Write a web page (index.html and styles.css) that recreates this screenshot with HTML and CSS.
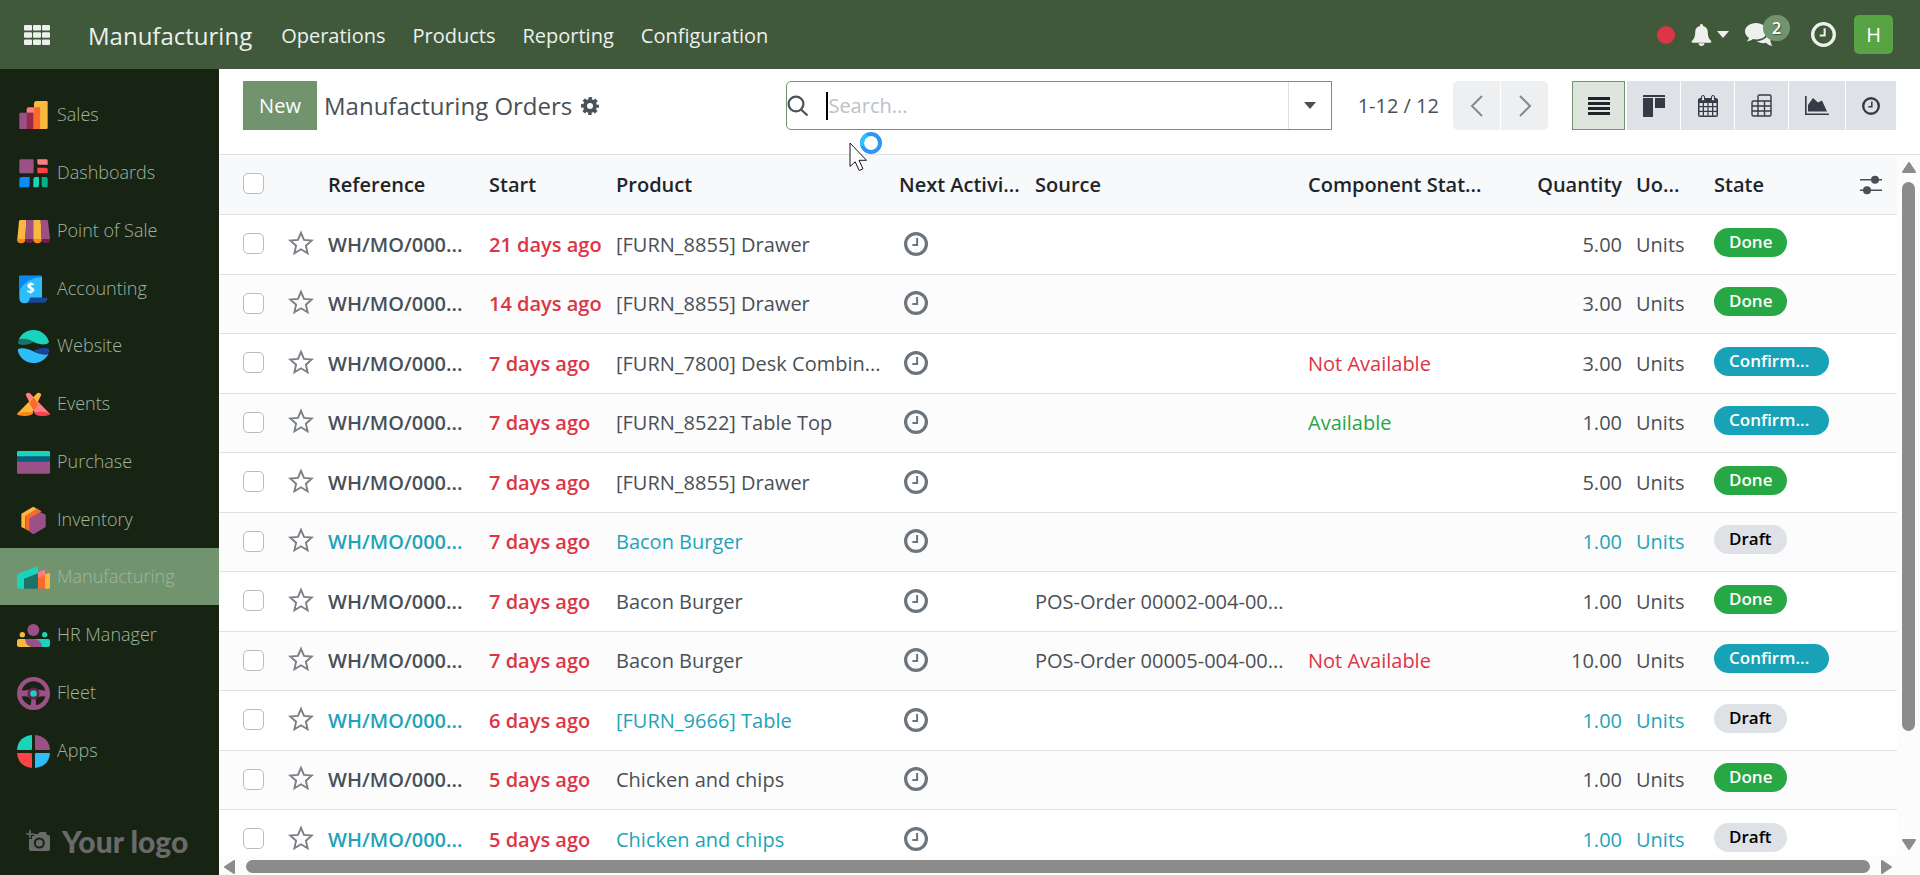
FILE: index.html
```html
<!DOCTYPE html>
<html lang="en">
<head>
  <meta charset="UTF-8" />
  <meta name="viewport" content="width=device-width, initial-scale=1" />
  <title>Manufacturing Orders</title>
  <link rel="stylesheet" href="styles.css">
</head>
<body>

  <!-- shared icons -->
  <svg class="sprite" aria-hidden="true">
    <symbol id="i-star" viewBox="0 0 26 26">
      <path d="M13 2.8l3 7.1 7.7.7-5.8 5.1 1.7 7.5-6.6-3.9-6.6 3.9 1.7-7.5-5.8-5.1 7.7-.7z" fill="none" stroke="currentColor" stroke-width="1.9" />
    </symbol>
    <symbol id="i-clock" viewBox="0 0 24 24">
      <circle cx="12" cy="12" r="10.4" fill="none" stroke="currentColor" stroke-width="3.2" />
      <path d="M13.1 6v7H8.4" fill="none" stroke="currentColor" stroke-width="2" />
    </symbol>
  </svg>

  <header class="navbar">
    <button class="apps-btn" aria-label="Apps">
      <svg width="26" height="20" viewBox="0 0 26 20" fill="#edf0ec">
        <rect width="8" height="5.6" rx="1" /><rect x="9" width="8" height="5.6" rx="1" /><rect x="18" width="8" height="5.6" rx="1" />
        <rect y="7.2" width="8" height="5.6" rx="1" /><rect x="9" y="7.2" width="8" height="5.6" rx="1" /><rect x="18" y="7.2" width="8" height="5.6" rx="1" />
        <rect y="14.4" width="8" height="5.6" rx="1" /><rect x="9" y="14.4" width="8" height="5.6" rx="1" /><rect x="18" y="14.4" width="8" height="5.6" rx="1" />
      </svg>
    </button>
    <a class="brand" href="#">Manufacturing</a>
    <nav class="menu">
      <a href="#">Operations</a>
      <a href="#">Products</a>
      <a href="#">Reporting</a>
      <a href="#">Configuration</a>
    </nav>
    <div class="systray">
      <span class="dot"></span>
      <button class="bell" aria-label="Notifications">
        <svg width="21" height="22" viewBox="0 0 21 22" fill="#edf0ec">
          <path d="M10.5 0c.9 0 1.5.6 1.5 1.5v.6c3 .6 4.8 2.9 4.8 6 0 5 1.300 7.300 3.700 9.100 0 .9-.7 1.500-1.500 1.500H2c-.8 0-1.500-.6-1.500-1.500C2.900 15.400 4.200 13.100 4.200 8.100c0-3.100 1.800-5.400 4.800-6v-.6C9 .6 9.600 0 10.500 0z" />
          <path d="M7.600 19.300h5.800a2.900 2.700 0 0 1-5.800 0z" />
        </svg>
        <svg width="12" height="7" viewBox="0 0 12 7" fill="#edf0ec"><path d="M0 0h12L6 7z" /></svg>
      </button>
      <button class="messages" aria-label="Messages">
        <svg width="29" height="26" viewBox="0 0 29 26" fill="#edf0ec">
          <path d="M11 1C4.900 1 0 4.700 0 9.400c0 2.600 1.600 4.900 4 6.400-.4 1.600-1.200 2.600-2.200 3.600 2.500-.2 4.500-1 6.200-2.300 1 .2 2 .3 3 .3 6.100 0 11-3.600 11-8S17.100 1 11 1z" />
          <path d="M24 7.500c2.700 1.300 4.400 3.500 4.400 6 0 2.100-1.200 4-3.200 5.300.4 1.900 1.100 3.400 2.400 5.200-2.800-.3-4.900-1.400-6.400-3.200-3.700.8-7.200.1-9.700-1.700C18.500 19.200 24.500 14.500 24 7.500z" />
        </svg>
        <span class="count">2</span>
      </button>
      <button class="activity" aria-label="Activities">
        <svg width="25" height="25"><use href="#i-clock" /></svg>
      </button>
      <button class="avatar">H</button>
    </div>
  </header>

  <div class="layout">
    <aside class="sidebar">
      <nav class="app-list">
        <a href="#">
          <svg viewBox="0 0 99 99">
            <path d="M51 14q0-8 8-8h29q4 0 4 4v76q0 4-4 4H51z" fill="#fcb73e" />
            <path d="M29 31q0-6 6-6h34v65H29z" fill="#fe7e87" />
            <path d="M51 25h18v61q0 4-4 4H51z" fill="#fc6a2b" />
            <path d="M7 45q0-4 4-4h38v49H7z" fill="#9b5088" />
            <path d="M29 41h20v45q0 4-4 4H29z" fill="#962b48" />
          </svg>
          <span>Sales</span>
        </a>
        <a href="#">
          <svg viewBox="0 0 99 99">
            <rect x="7" y="7" width="43" height="42" rx="4" fill="#9b5088" />
            <path d="M61 7h27q4 0 4 4v12H67q-6 0-6-6z" fill="#fe7e87" />
            <path d="M61 32h25q6 0 6 6v11H65q-4 0-4-4z" fill="#fb4348" />
            <path d="M15 60h23v23q0 8-8 8H7V68q0-8 8-8z" fill="#0b8cf8" />
            <path d="M55 60h11v23q0 8-6 8H49V68q0-8 6-8z" fill="#1ad3bb" />
            <path d="M74 60h12q6 0 6 6v25H80q-6 0-6-8z" fill="#04b08b" />
          </svg>
          <span>Dashboards</span>
        </a>
        <a href="#">
          <svg viewBox="0 0 99 99">
            <path d="M0 72h25v3a12 9 0 0 1-25 0z" fill="#fb8a14" />
            <path d="M25 72h24v3a12 9 0 0 1-24 0zM74 72h25v3a12 9 0 0 1-25 0z" fill="#6d1f52" />
            <path d="M49 72h25v3a12 9 0 0 1-25 0z" fill="#fb8a14" />
            <path d="M10 15h18l-3 57H1L6 19q1-4 4-4z" fill="#fcb73e" />
            <path d="M28 15h21v57H25z" fill="#9b5088" />
            <path d="M49 15h22l3 57H49z" fill="#fcb73e" />
            <path d="M71 15h17q4 0 5 4l6 53H74z" fill="#9b5088" />
          </svg>
          <span>Point of Sale</span>
        </a>
        <a href="#">
          <svg viewBox="0 0 99 99">
            <path d="M7 8h64q4 0 4 4v62H39q0 17-16 17T7 74z" fill="#2ebcfa" />
            <path d="M7 8h64q4 0 4 4Q30 14 7 52z" fill="#0b86f5" />
            <path d="M39 74h52q0 15-14 15H28q11-3 11-15z" fill="#17479b" />
            <text x="41" y="61" text-anchor="middle" class="dollar">$</text>
          </svg>
          <span>Accounting</span>
        </a>
        <a href="#">
          <svg viewBox="0 0 99 99">
            <path d="M5 29C15 8 32 0 49 0c22 0 41 14 47 35-2 9-22 12-45 2C34 29 16 24 5 29z" fill="#1ad3bb" />
            <path d="M3 36c2-12 24-14 47 0-15 9-40 13-47 4z" fill="#1c7168" />
            <path d="M2 60c3-7 24-7 45 3 20 9 38 14 48 8C86 88 69 99 49 99 25 99 6 82 2 60z" fill="#2ebcfa" />
            <path d="M49 63c14-8 41-13 48-4 2 18-24 18-48 4z" fill="#17479b" />
          </svg>
          <span>Website</span>
        </a>
        <a href="#">
          <svg viewBox="0 0 99 99">
            <path d="M26 20q2-6 8-6 4 0 7 4l58 60q-5 5-24 5-18 0-20-5z" fill="#fe7e87" />
            <path d="M73 20q-2-6-8-6-4 0-7 4L0 78q5 5 24 5 18 0 20-5z" fill="#fcb73e" />
            <path d="M50 27l14 22-14 19-13-23z" fill="#fc6a2b" />
            <path d="M0 79q8-8 24-8t26 2q-3 10-26 10T0 79z" fill="#fb8a14" />
            <path d="M99 79q-8-8-24-8t-22 2q-1 10 22 10t24-4z" fill="#fb4348" />
          </svg>
          <span>Events</span>
        </a>
        <a href="#">
          <svg viewBox="0 0 99 99">
            <path d="M0 19q0-4 4-4h91q4 0 4 4v14H0z" fill="#1ad3bb" />
            <path d="M0 45h99v34q0 4-4 4H4q-4 0-4-4z" fill="#9b5088" />
            <path d="M0 31h99v12q0 4-4 4H4q-4 0-4-4z" fill="#055e7d" />
          </svg>
          <span>Purchase</span>
        </a>
        <a href="#">
          <svg viewBox="0 0 99 99">
            <path d="M61 20l25 12v37L49 91 36 82V41z" fill="#9b5088" />
            <path d="M49 8l12 7-36 22v38l-12-6V29z" fill="#fcb73e" />
            <path d="M61 14l13 8-37 21v39l-12-7V36z" fill="#fc6a2b" />
          </svg>
          <span>Inventory</span>
        </a>
        <a href="#" class="active">
          <svg viewBox="0 0 99 99">
            <path d="M84 40l15-5v44q0 4-4 4H84z" fill="#fcb73e" />
            <path d="M63 34l21-8v32H63z" fill="#fe7e87" />
            <path d="M63 50l21-7v36q0 4-4 4H63z" fill="#fc6a2b" />
            <path d="M0 40l63-25v25L21 54v29H4q-4 0-4-4z" fill="#1ad3bb" />
            <path d="M21 53l42-16v42q0 4-4 4H21z" fill="#1c7168" />
          </svg>
          <span>Manufacturing</span>
        </a>
        <a href="#">
          <svg viewBox="0 0 99 99">
            <circle cx="49" cy="33" r="18" fill="#9b5088" />
            <circle cx="16" cy="47" r="8" fill="#fcb73e" />
            <circle cx="83" cy="47" r="8" fill="#1ad3bb" />
            <path d="M6 60h20q2 24 26 24H6q-6 0-6-6V66q0-6 6-6z" fill="#fcb73e" />
            <path d="M48 60h45q6 0 6 6v12q0 6-6 6H70z" fill="#1ad3bb" />
            <path d="M24 60h24q25 0 27 24H50Q26 84 24 60z" fill="#9b5088" />
          </svg>
          <span>HR Manager</span>
        </a>
        <a href="#">
          <svg viewBox="0 0 99 99">
            <circle cx="49.500" cy="49.500" r="43" fill="none" stroke="#9b5088" stroke-width="13" />
            <path d="M6 38q20 6 44-4 24 10 43 4v22q-27-6-37 6 0 12 3 28H40q3-16 3-28Q33 54 6 60z" fill="#9b5088" />
            <circle cx="49.500" cy="49.500" r="18" fill="#6d1f52" />
            <circle cx="49.500" cy="49.500" r="10" fill="#1ad3bb" />
          </svg>
          <span>Fleet</span>
        </a>
        <a href="#">
          <svg viewBox="0 0 99 99">
            <path d="M45 0v41q0 4-4 4H0Q3 5 45 0z" fill="#1ad3bb" />
            <path d="M54 0v41q0 4 4 4h41Q96 5 54 0z" fill="#9b5088" />
            <path d="M45 99V58q0-4-4-4H0q3 40 45 45z" fill="#fb4348" />
            <path d="M54 99V58q0-4 4-4h41q-3 40-45 45z" fill="#2ebcfa" />
          </svg>
          <span>Apps</span>
        </a>
      </nav>
      <div class="logo">
        <svg width="24" height="22" viewBox="0 0 24 22">
          <path d="M8 4h4l2-2h6l1 3h1q2 0 2 2v12q0 2-2 2H5q-2 0-2-2V9h3V6h2z" fill="#6a6a6a" />
          <path d="M4 0v8M0 4h8" stroke="#6a6a6a" stroke-width="1.600" />
          <circle cx="13.300" cy="13" r="4.500" fill="none" stroke="#172414" stroke-width="2" />
        </svg>
        <span>Your logo</span>
      </div>
    </aside>

    <main class="content">
      <div class="control-panel">
        <div class="cp-left">
          <button class="new-btn">New</button>
          <h1>Manufacturing Orders</h1>
          <button class="gear" aria-label="Settings">
            <svg width="18" height="18" viewBox="0 0 18 18">
              <circle cx="9" cy="9" r="5" fill="none" stroke="#495057" stroke-width="4" />
              <circle cx="9" cy="9" r="7.600" fill="none" stroke="#495057" stroke-width="2.800" stroke-dasharray="3.400 2.570" stroke-dashoffset="1.700" />
            </svg>
          </button>
        </div>

        <div class="search">
          <svg width="22" height="22" viewBox="0 0 22 22" fill="none" stroke="#495057" stroke-width="2.200">
            <circle cx="9" cy="9" r="7.400" /><path d="M14 14.500l6.500 6" />
          </svg>
          <span class="caret"></span>
          <input type="text" placeholder="Search..." aria-label="Search" />
          <button class="toggle" aria-label="Filters">
            <svg width="12" height="7" viewBox="0 0 12 7" fill="#495057"><path d="M0 0h12L6 7z" /></svg>
          </button>
        </div>

        <div class="cp-right">
          <span class="pager">1-12 / 12</span>
          <div class="pager-btns">
            <button aria-label="Previous">
              <svg width="14" height="22" viewBox="0 0 14 22"><path d="M12 1L2 11l10 10" /></svg>
            </button>
            <button aria-label="Next">
              <svg width="14" height="22" viewBox="0 0 14 22"><path d="M2 1l10 10L2 21" /></svg>
            </button>
          </div>
          <div class="views">
            <button class="active" aria-label="List">
              <svg width="22" height="18" viewBox="0 0 22 18" fill="#1f242b"><path d="M0 0h22v3H0zM0 5h22v3H0zM0 10h22v3H0zM0 15h22v3H0z" /></svg>
            </button>
            <button aria-label="Kanban">
              <svg width="22" height="22" viewBox="0 0 22 22" fill="#343a46"><path d="M0 0h22v2H0zM0 3h10v19H0zM12 3h10v10H12z" /></svg>
            </button>
            <button aria-label="Calendar">
              <svg width="20" height="22" viewBox="0 0 20 22">
                <path d="M2 3h16q2 0 2 2v15q0 2-2 2H2q-2 0-2-2V5q0-2 2-2z" fill="#343a46" />
                <path d="M1.500 8h3.200v3H1.500zM6 8h3.400v3H6zM10.600 8H14v3h-3.400zM15.300 8h3.200v3h-3.200zM1.500 12.300h3.200v3.400H1.500zM6 12.300h3.400v3.400H6zM10.600 12.300H14v3.400h-3.400zM15.300 12.300h3.200v3.400h-3.200zM1.500 17h3.200v3.400H1.500zM6 17h3.400v3.400H6zM10.600 17H14v3.400h-3.400zM15.300 17h3.200v3.400h-3.200z" fill="#dee2e6" />
                <rect x="3.500" y=".5" width="3" height="5.500" rx="1.500" fill="#dee2e6" stroke="#343a46" />
                <rect x="13.500" y=".5" width="3" height="5.500" rx="1.500" fill="#dee2e6" stroke="#343a46" />
              </svg>
            </button>
            <button aria-label="Pivot">
              <svg width="21" height="23" viewBox="0 0 21 23" fill="none" stroke="#343a46" stroke-width="1.400">
                <path d="M7 7V2.500Q7 1 8.500 1h10Q20 1 20 2.500v18q0 1.500-1.500 1.500H2.500Q1 22 1 20.500v-12Q1 7 2.500 7H20M1 12h19M1 17h19M7 7v15M13.500 7v15" />
              </svg>
            </button>
            <button class="wide" aria-label="Graph">
              <svg width="24" height="19" viewBox="0 0 24 19" fill="#343a46"><path d="M0 0h1.600v17.400H24V19H0z" /><path d="M3 15.500V9l5-7 5 4.500 4-2 5 11z" /></svg>
            </button>
            <button class="narrow" aria-label="Activity">
              <svg width="18" height="18"><use href="#i-clock" /></svg>
            </button>
          </div>
        </div>

        <svg class="pointer" width="36" height="46" viewBox="0 0 36 46">
          <circle cx="22" cy="12" r="9" fill="none" stroke="#2d95f3" stroke-width="4" />
          <path d="M13.500 15A9 9 0 0 1 18 4" fill="none" stroke="#27c5fb" stroke-width="4" />
          <path d="M1 12v23.500l5.200-4.700 4 8.700 3.800-1.700-4-8.500h7.500z" fill="#fff" stroke="#14141e" />
        </svg>
      </div>

      <div class="list-area">
        <div class="list-view">
          <table class="orders">
            <colgroup>
              <col class="c-check"><col class="c-star"><col class="c-ref"><col class="c-start"><col class="c-product"><col class="c-next">
              <col class="c-source"><col class="c-comp"><col class="c-qty"><col class="c-uom"><col class="c-state"><col class="c-opt">
            </colgroup>
            <thead>
              <tr>
                <th class="check"><input type="checkbox" aria-label="Select all" /></th>
                <th></th>
                <th>Reference</th>
                <th>Start</th>
                <th>Product</th>
                <th>Next Activi...</th>
                <th>Source</th>
                <th>Component Stat...</th>
                <th class="num">Quantity</th>
                <th>Uo...</th>
                <th>State</th>
                <th class="opt">
                  <button aria-label="Optional columns">
                    <svg width="22" height="20" viewBox="0 0 22 20" fill="#495057"><path d="M0 4h22v1.600H0zM0 14.500h22v1.600H0z" /><circle cx="15" cy="4.800" r="4" /><circle cx="7" cy="15.300" r="4" /></svg>
                  </button>
                </th>
              </tr>
            </thead>
            <tbody>
              <tr>
                <td class="check"><input type="checkbox" aria-label="Select" /></td><td class="star"><svg><use href="#i-star" /></svg></td>
                <td class="ref">WH/MO/000...</td><td class="late">21 days ago</td><td>[FURN_8855] Drawer</td><td class="next"><svg><use href="#i-clock" /></svg></td>
                <td></td><td></td><td class="num">5.00</td><td>Units</td><td class="state"><span class="badge done">Done</span></td><td></td>
              </tr>
              <tr>
                <td class="check"><input type="checkbox" aria-label="Select" /></td><td class="star"><svg><use href="#i-star" /></svg></td>
                <td class="ref">WH/MO/000...</td><td class="late">14 days ago</td><td>[FURN_8855] Drawer</td><td class="next"><svg><use href="#i-clock" /></svg></td>
                <td></td><td></td><td class="num">3.00</td><td>Units</td><td class="state"><span class="badge done">Done</span></td><td></td>
              </tr>
              <tr>
                <td class="check"><input type="checkbox" aria-label="Select" /></td><td class="star"><svg><use href="#i-star" /></svg></td>
                <td class="ref">WH/MO/000...</td><td class="late">7 days ago</td><td>[FURN_7800] Desk Combin...</td><td class="next"><svg><use href="#i-clock" /></svg></td>
                <td></td><td class="missing">Not Available</td><td class="num">3.00</td><td>Units</td><td class="state"><span class="badge confirmed">Confirm...</span></td><td></td>
              </tr>
              <tr>
                <td class="check"><input type="checkbox" aria-label="Select" /></td><td class="star"><svg><use href="#i-star" /></svg></td>
                <td class="ref">WH/MO/000...</td><td class="late">7 days ago</td><td>[FURN_8522] Table Top</td><td class="next"><svg><use href="#i-clock" /></svg></td>
                <td></td><td class="available">Available</td><td class="num">1.00</td><td>Units</td><td class="state"><span class="badge confirmed">Confirm...</span></td><td></td>
              </tr>
              <tr>
                <td class="check"><input type="checkbox" aria-label="Select" /></td><td class="star"><svg><use href="#i-star" /></svg></td>
                <td class="ref">WH/MO/000...</td><td class="late">7 days ago</td><td>[FURN_8855] Drawer</td><td class="next"><svg><use href="#i-clock" /></svg></td>
                <td></td><td></td><td class="num">5.00</td><td>Units</td><td class="state"><span class="badge done">Done</span></td><td></td>
              </tr>
              <tr class="info">
                <td class="check"><input type="checkbox" aria-label="Select" /></td><td class="star"><svg><use href="#i-star" /></svg></td>
                <td class="ref">WH/MO/000...</td><td class="late">7 days ago</td><td>Bacon Burger</td><td class="next"><svg><use href="#i-clock" /></svg></td>
                <td></td><td></td><td class="num">1.00</td><td>Units</td><td class="state"><span class="badge draft">Draft</span></td><td></td>
              </tr>
              <tr>
                <td class="check"><input type="checkbox" aria-label="Select" /></td><td class="star"><svg><use href="#i-star" /></svg></td>
                <td class="ref">WH/MO/000...</td><td class="late">7 days ago</td><td>Bacon Burger</td><td class="next"><svg><use href="#i-clock" /></svg></td>
                <td>POS-Order 00002-004-00...</td><td></td><td class="num">1.00</td><td>Units</td><td class="state"><span class="badge done">Done</span></td><td></td>
              </tr>
              <tr>
                <td class="check"><input type="checkbox" aria-label="Select" /></td><td class="star"><svg><use href="#i-star" /></svg></td>
                <td class="ref">WH/MO/000...</td><td class="late">7 days ago</td><td>Bacon Burger</td><td class="next"><svg><use href="#i-clock" /></svg></td>
                <td>POS-Order 00005-004-00...</td><td class="missing">Not Available</td><td class="num">10.00</td><td>Units</td><td class="state"><span class="badge confirmed">Confirm...</span></td><td></td>
              </tr>
              <tr class="info">
                <td class="check"><input type="checkbox" aria-label="Select" /></td><td class="star"><svg><use href="#i-star" /></svg></td>
                <td class="ref">WH/MO/000...</td><td class="late">6 days ago</td><td>[FURN_9666] Table</td><td class="next"><svg><use href="#i-clock" /></svg></td>
                <td></td><td></td><td class="num">1.00</td><td>Units</td><td class="state"><span class="badge draft">Draft</span></td><td></td>
              </tr>
              <tr>
                <td class="check"><input type="checkbox" aria-label="Select" /></td><td class="star"><svg><use href="#i-star" /></svg></td>
                <td class="ref">WH/MO/000...</td><td class="late">5 days ago</td><td>Chicken and chips</td><td class="next"><svg><use href="#i-clock" /></svg></td>
                <td></td><td></td><td class="num">1.00</td><td>Units</td><td class="state"><span class="badge done">Done</span></td><td></td>
              </tr>
              <tr class="info">
                <td class="check"><input type="checkbox" aria-label="Select" /></td><td class="star"><svg><use href="#i-star" /></svg></td>
                <td class="ref">WH/MO/000...</td><td class="late">5 days ago</td><td>Chicken and chips</td><td class="next"><svg><use href="#i-clock" /></svg></td>
                <td></td><td></td><td class="num">1.00</td><td>Units</td><td class="state"><span class="badge draft">Draft</span></td><td></td>
              </tr>
            </tbody>
          </table>
        </div>

        <!-- scrollbars -->
        <div class="vbar">
          <svg width="14" height="11" viewBox="0 0 14 11"><path d="M7 1l6 9H1z" /></svg>
          <div class="track"><div class="thumb"></div></div>
          <svg width="14" height="11" viewBox="0 0 14 11"><path d="M1 1h12l-6 9z" /></svg>
        </div>
        <div class="hbar">
          <svg width="11" height="14" viewBox="0 0 11 14"><path d="M1 7l9-6v12z" /></svg>
          <div class="thumb"></div>
          <svg width="11" height="14" viewBox="0 0 11 14"><path d="M1 1l9 6-9 6z" /></svg>
        </div>
      </div>
    </main>
  </div>

</body>
</html>
```
FILE: styles.css
```css
* {
  box-sizing: border-box;
}
body {
  margin: 0;
  height: 100vh;
  display: flex;
  flex-direction: column;
  overflow: hidden;
  font-family: "Open Sans", "Noto Sans", sans-serif;
  font-size: 20px;
  line-height: 30px;
  color: #495057;
  background: #fff;
}
a {
  color: inherit;
  text-decoration: none;
}
button {
  display: flex;
  align-items: center;
  justify-content: center;
  padding: 0;
  border: none;
  background: none;
  font: inherit;
  color: inherit;
  cursor: pointer;
}
svg {
  display: block;
  flex: none;
}
.sprite {
  width: 0;
  height: 0;
  position: absolute;
}

/* navbar */
.navbar {
  flex: none;
  display: flex;
  align-items: center;
  height: 69px;
  padding: 0 27px 0 24px;
  background: #40593b;
  color: #edf0ec;
}
.brand,
.menu {
  padding-top: 2px;
}
.brand {
  margin-left: 38px;
  font-size: 24px;
}
.menu {
  display: flex;
  gap: 27px;
  margin-left: 29px;
}
.systray {
  display: flex;
  align-items: center;
  margin-left: auto;
}
.dot {
  width: 18px;
  height: 18px;
  border-radius: 50%;
  background: #dc3545;
}
.bell {
  gap: 5px;
  margin-left: 16px;
}
.messages {
  position: relative;
  margin-left: 16px;
}
.count {
  position: absolute;
  left: 18px;
  top: -7px;
  width: 27px;
  height: 26px;
  border-radius: 13px;
  background: #71946f;
  color: #fff;
  font-size: 16px;
  font-weight: 600;
  line-height: 26px;
  text-shadow: 1px 1px 1px #40593b;
}
.activity {
  margin-left: 37px;
}
.avatar {
  width: 39px;
  height: 39px;
  margin-left: 18px;
  border-radius: 5px;
  background: #58a344;
  color: #fff;
}

/* sidebar */
.layout {
  flex: 1;
  display: flex;
  min-height: 0;
}
.sidebar {
  flex: none;
  display: flex;
  flex-direction: column;
  width: 219px;
  padding: 17px 0 16px;
  background: #172414;
}
.app-list a {
  display: flex;
  align-items: center;
  gap: 7px;
  height: 57px;
  margin-bottom: 1px;
  padding: 2px 17px 0;
  color: #a2b49f;
  font-size: 18px;
  font-weight: 300;
}
.app-list a:nth-child(4n) {
  margin-bottom: 0;
}
.app-list a.active {
  background: #71946f;
}
.app-list svg {
  width: 33px;
  height: 33px;
}
.app-list span {
  padding-bottom: 4px;
}
.dollar {
  fill: #fff;
  font-size: 40px;
  font-weight: 700;
}
.logo {
  display: flex;
  align-items: center;
  gap: 12px;
  margin-top: auto;
  padding-left: 26px;
  color: #6a6a6a;
  font-family: Lato, sans-serif;
  font-size: 30px;
  font-weight: 900;
  line-height: 36px;
}

/* control panel */
.content {
  flex: 1;
  display: flex;
  flex-direction: column;
  min-width: 0;
}
.control-panel {
  position: relative;
  flex: none;
  display: grid;
  grid-template-columns: 27fr 546px 28fr;
  align-items: start;
  height: 86px;
  padding: 12px 24px 0;
  border-bottom: 1px solid #dee2e6;
}
.cp-left,
.cp-right {
  display: flex;
  align-items: center;
}
.cp-right {
  justify-content: flex-end;
}
.new-btn {
  width: 74px;
  height: 49px;
  background: #71946f;
  color: #fff;
  font-weight: 500;
}
h1 {
  margin: 0 9px 0 7px;
  font-size: 24px;
  font-weight: 400;
  white-space: nowrap;
}
.search {
  display: flex;
  align-items: center;
  height: 49px;
  border: 1px solid #71946f;
  border-radius: 5px 0 0 5px;
}
.caret {
  width: 2px;
  height: 28px;
  margin-left: 17px;
  background: #000;
}
.search input {
  flex: 1;
  min-width: 0;
  padding: 0;
  border: none;
  outline: none;
  background: none;
  font: inherit;
}
.search input::placeholder {
  color: #bcc1c7;
}
.toggle {
  width: 43px;
  height: 47px;
  border-left: 1px solid #dee2e6;
}
.pager {
  margin-right: 14px;
}
.pager-btns {
  display: flex;
  gap: 1px;
  margin-right: 24px;
}
.pager-btns button {
  width: 47px;
  height: 49px;
  background: #eeeff1;
}
.pager-btns button:first-child {
  border-radius: 5px 0 0 5px;
}
.pager-btns button:last-child {
  border-radius: 0 5px 5px 0;
}
.pager-btns path {
  fill: none;
  stroke: #858a90;
  stroke-width: 2;
}
.views {
  display: flex;
  gap: 1px;
}
.views button {
  width: 53px;
  height: 49px;
  background: #dee2e6;
  color: #343a46;
}
.views .active {
  margin-right: 1px;
  border: 1px solid #71946f;
  background: #dee5dd;
}
.views .wide {
  width: 56px;
}
.views .narrow {
  width: 50px;
}
.pointer {
  position: absolute;
  left: 630px;
  top: 62px;
}

/* list */
.list-area {
  flex: 1;
  display: grid;
  grid-template-columns: 1fr 23px;
  grid-template-rows: 1fr 20px;
  min-height: 0;
  background: #fcfcfc;
}
.list-view {
  min-height: 0;
  overflow: hidden;
}
.orders {
  width: 100%;
  table-layout: fixed;
  border-collapse: separate;
  border-spacing: 0;
  background: #fff;
}
.c-check { width: 62px; }
.c-star { width: 40px; }
.c-ref { width: 161px; }
.c-start { width: 127px; }
.c-product { width: 283px; }
.c-next { width: 136px; }
.c-comp { width: 200px; }
.c-qty { width: 128px; }
.c-uom { width: 78px; }
.c-state { width: 146px; }
.c-opt { width: 44px; }
.orders th,
.orders td {
  height: 60px;
  padding: 0 7px;
  border-bottom: 1px solid #dee2e6;
  text-align: left;
  white-space: nowrap;
}
.orders th {
  background: #f8f9fb;
  color: #212529;
  font-weight: 600;
}
.orders tbody tr:nth-child(even) td {
  height: 59px;
  background: #fcfcfc;
}
.orders .check {
  padding: 0 0 0 24px;
}
.check input {
  display: block;
  appearance: none;
  width: 21px;
  height: 21px;
  margin: 0 0 2px;
  border: 1px solid #b9bcbf;
  border-radius: 5px;
  background: #fff;
}
.orders .star {
  color: #7b8086;
}
.star svg {
  width: 26px;
  height: 26px;
  margin-bottom: 4px;
}
.orders .next {
  padding-left: 12px;
  color: #6c757d;
}
.next svg {
  width: 24px;
  height: 24px;
  margin-bottom: 2px;
}
.orders .num {
  text-align: right;
}
.info td {
  color: #1fa3b8;
}
.orders .ref {
  font-weight: 600;
}
.orders .late {
  color: #dc3545;
  font-weight: 600;
}
.missing {
  color: #dc3545;
}
.available {
  color: #28a745;
}
.badge {
  display: block;
  width: fit-content;
  height: 29px;
  margin-bottom: 5px;
  padding: 0 15px;
  border-radius: 15px;
  font-size: 17px;
  font-weight: 600;
  line-height: 28px;
}
.badge.done {
  background: #28a745;
  color: #fff;
}
.badge.confirmed {
  width: 115px;
  background: #17a2b8;
  color: #fff;
}
.badge.draft {
  background: #dee2e6;
  color: #000;
}

/* scrollbars */
.vbar {
  display: flex;
  flex-direction: column;
  align-items: center;
  padding: 7px 0 5px;
}
.track {
  flex: 1;
  padding: 9px 0 11px;
}
.vbar .thumb {
  width: 13px;
  height: 85%;
  border-radius: 7px;
  background: #8b8b8b;
}
.hbar {
  display: flex;
  align-items: center;
  gap: 11px;
  padding: 3px 5px 0;
}
.hbar .thumb {
  flex: 1;
  height: 13px;
  border-radius: 7px;
  background: #8b8b8b;
}
.vbar svg,
.hbar svg {
  fill: #8b8b8b;
  stroke: #8b8b8b;
  stroke-width: 2;
  stroke-linejoin: round;
}
```
